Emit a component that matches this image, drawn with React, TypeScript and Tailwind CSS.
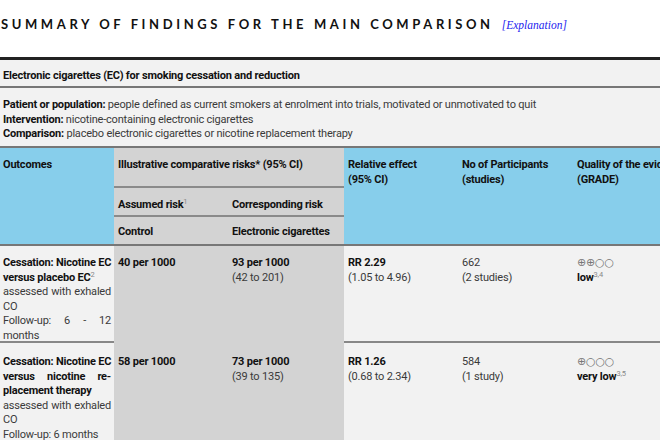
import React from 'react';

const cols = 'grid grid-cols-[114px_115px_115px_114px_115px_115px]';

const Sup = ({ children }: { children: React.ReactNode }) => (
  <span className="relative -top-[4px] text-[7.5px] font-normal text-[#888] leading-none">{children}</span>
);

// one justified line of an outcome cell
const J = ({ children }: { children: React.ReactNode }) => (
  <div className="text-justify [text-align-last:justify] whitespace-nowrap">{children}</div>
);
const L = ({ children }: { children: React.ReactNode }) => <div className="whitespace-nowrap">{children}</div>;

const Grade = ({ marks }: { marks: string }) => (
  <div className="font-['DejaVu_Sans',sans-serif] text-[11px] leading-[14.5px] text-[#777]">{marks}</div>
);

const App = () => {
  return (
    <div className="w-[660px] h-[440px] overflow-hidden bg-white font-['Roboto',sans-serif]">
      {/* Title */}
      <div className="h-[57px] pt-[12px] pl-px whitespace-nowrap">
        <span className="font-['Lato',sans-serif] font-bold text-[13px] tracking-[3.6px] text-[#111]">
          SUMMARY OF FINDINGS FOR THE MAIN COMPARISON
        </span>
        <span className="ml-[8px] font-['Liberation_Serif',serif] italic text-[11.5px] text-[#2323ee]">[Explanation]</span>
      </div>

      <div className="w-[688px] border-t-[3px] border-[#222] bg-[#f2f2f2] text-[11px] leading-[14.5px] tracking-[-0.2px] text-[#3a3a3a]">
        {/* Caption */}
        <div className="h-[28px] pt-[9px] pl-[3px] font-bold text-[#111] border-b-2 border-[#777]">
          Electronic cigarettes (EC) for smoking cessation and reduction
        </div>

        {/* Population */}
        <div className="h-[60px] pt-[10px] pl-[3px] border-b-2 border-[#777]">
          <div><b className="text-[#111]">Patient or population:</b> people defined as current smokers at enrolment into trials, motivated or unmotivated to quit</div>
          <div><b className="text-[#111]">Intervention:</b> nicotine-containing electronic cigarettes</div>
          <div><b className="text-[#111]">Comparison:</b> placebo electronic cigarettes or nicotine replacement therapy</div>
        </div>

        {/* Header */}
        <div className={`${cols} grid-rows-[40px_29px_29px] font-bold text-[#111]`}>
          <div className="row-span-3 bg-[#87ceeb] pt-[10px] pl-[3px] border-b-2 border-[#777]">Outcomes</div>
          <div className="col-span-2 bg-[#d3d3d3] pt-[10px] pl-[4px] border-b-2 border-[#8a8a8a]">Illustrative comparative risks* (95% CI)</div>
          <div className="row-span-3 bg-[#87ceeb] pt-[10px] pl-[4px] border-b-2 border-[#777]">Relative effect<br />(95% CI)</div>
          <div className="row-span-3 bg-[#87ceeb] pt-[10px] pl-[4px] border-b-2 border-[#777]">No of Participants<br />(studies)</div>
          <div className="row-span-3 bg-[#87ceeb] pt-[10px] pl-[4px] border-b-2 border-[#777] whitespace-nowrap">Quality of the evidence<br />(GRADE)</div>
          <div className="bg-[#d3d3d3] pt-[10px] pl-[4px] border-b-2 border-[#8a8a8a]">Assumed risk<Sup>1</Sup></div>
          <div className="bg-[#d3d3d3] pt-[10px] pl-[3px] border-b-2 border-[#8a8a8a]">Corresponding risk</div>
          <div className="bg-[#d3d3d3] pt-[8px] pl-[4px] border-b-2 border-[#777]">Control</div>
          <div className="bg-[#d3d3d3] pt-[8px] pl-[3px] border-b-2 border-[#777]">Electronic cigarettes</div>
        </div>

        {/* Row 1 */}
        <div className={`${cols} h-[97px] border-b-2 border-[#888]`}>
          <div className="pt-[10px] pl-[3px] pr-[3px]">
            <J><b className="text-[#111]">Cessation: Nicotine EC</b></J>
            <L><b className="text-[#111]">versus placebo EC</b><Sup>2</Sup></L>
            <J>assessed with exhaled</J>
            <L>CO</L>
            <J>Follow-up: 6 - 12</J>
            <L>months</L>
          </div>
          <div className="bg-[#d3d3d3] pt-[10px] pl-[4px] font-bold text-[#111]">40 per 1000</div>
          <div className="bg-[#d3d3d3] pt-[10px] pl-[3px]"><b className="text-[#111]">93 per 1000</b><br />(42 to 201)</div>
          <div className="pt-[10px] pl-[4px]"><b className="text-[#111]">RR 2.29</b><br />(1.05 to 4.96)</div>
          <div className="pt-[10px] pl-[4px]">662<br />(2 studies)</div>
          <div className="pt-[10px] pl-[4px]">
            <Grade marks="⊕⊕○○" />
            <b className="text-[#111]">low</b><Sup>3,4</Sup>
          </div>
        </div>

        {/* Row 2 */}
        <div className={`${cols} h-[100px]`}>
          <div className="pt-[12px] pl-[3px] pr-[3px]">
            <J><b className="text-[#111]">Cessation: Nicotine EC</b></J>
            <J><b className="text-[#111]">versus nicotine re-</b></J>
            <L><b className="text-[#111]">placement therapy</b></L>
            <J>assessed with exhaled</J>
            <L>CO</L>
            <L>Follow-up: 6 months</L>
          </div>
          <div className="bg-[#d3d3d3] pt-[12px] pl-[4px] font-bold text-[#111]">58 per 1000</div>
          <div className="bg-[#d3d3d3] pt-[12px] pl-[3px]"><b className="text-[#111]">73 per 1000</b><br />(39 to 135)</div>
          <div className="pt-[12px] pl-[4px]"><b className="text-[#111]">RR 1.26</b><br />(0.68 to 2.34)</div>
          <div className="pt-[12px] pl-[4px]">584<br />(1 study)</div>
          <div className="pt-[12px] pl-[4px]">
            <Grade marks="⊕○○○" />
            <b className="text-[#111]">very low</b><Sup>3,5</Sup>
          </div>
        </div>
      </div>
    </div>
  );
};

export default App;
